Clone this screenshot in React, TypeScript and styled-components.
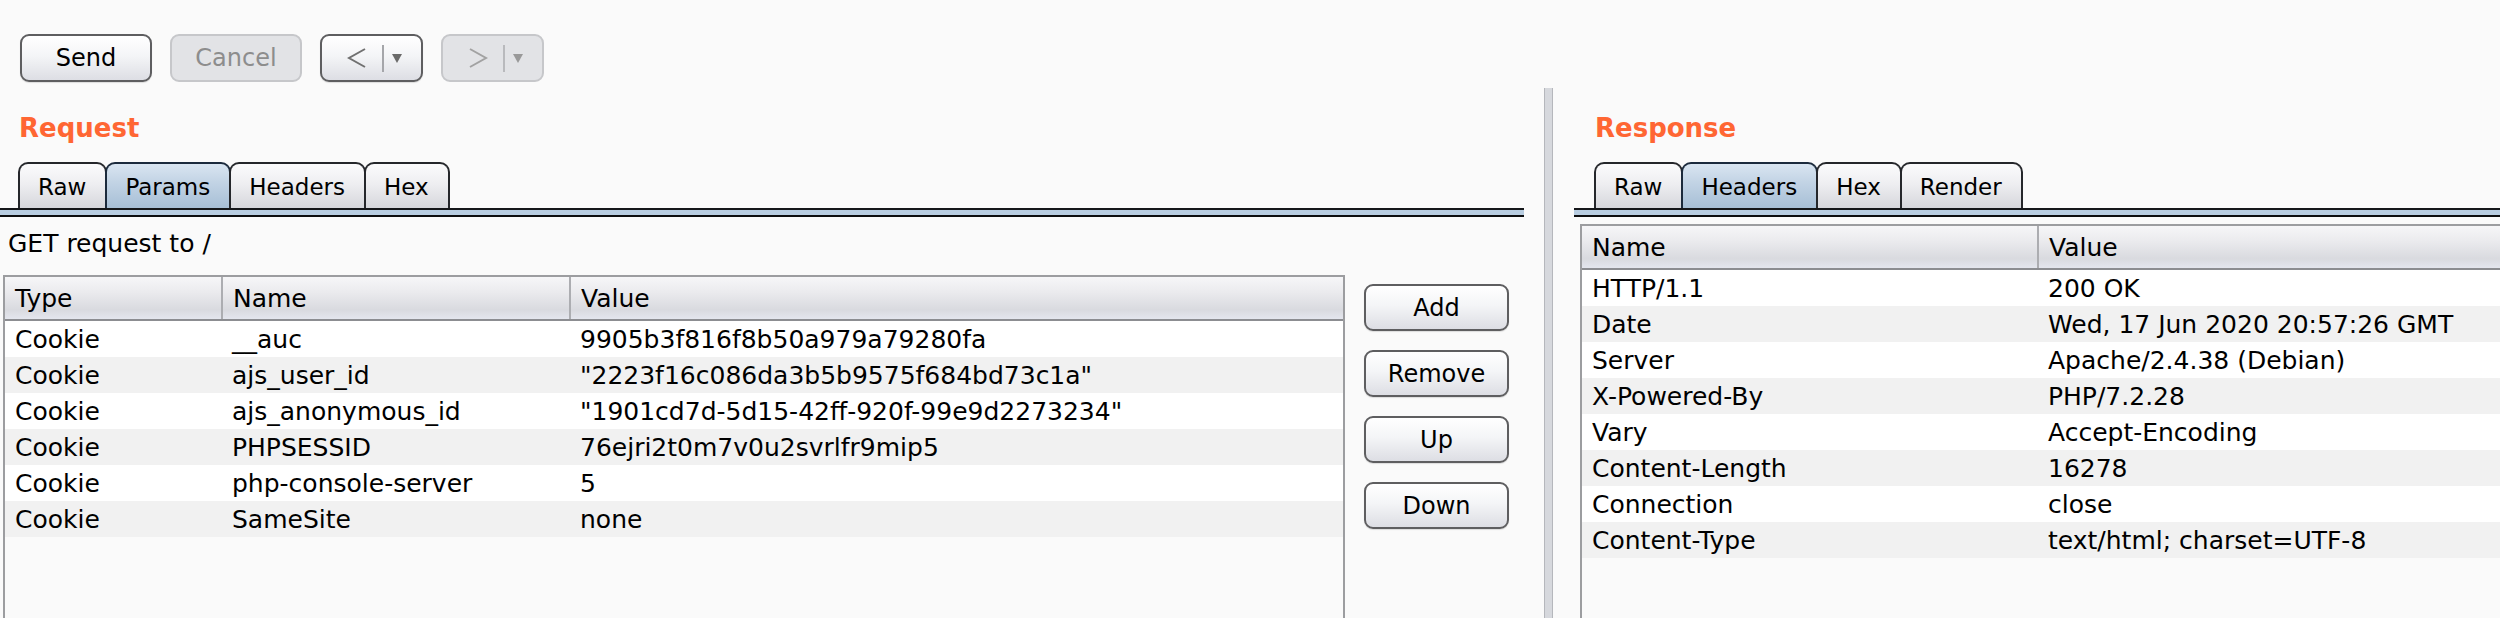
import React from "react";
import styled, { createGlobalStyle, css } from "styled-components";

const GlobalStyle = createGlobalStyle`
  html, body { margin: 0; padding: 0; background: #fafafa; }
  body {
    font-family: "DejaVu Sans", "Liberation Sans", sans-serif;
    color: #000;
    overflow: hidden;
  }
  * { box-sizing: border-box; }
`;

const Page = styled.div`
  height: 618px;
  display: flex;
  flex-direction: column;
  overflow: hidden;
  background: #fafafa;
`;

const Toolbar = styled.div`
  display: flex;
  gap: 18px;
  height: 88px;
  padding: 34px 0 0 20px;
  flex-shrink: 0;
`;

const ToolButton = styled.div<{ $w: number; $off?: boolean }>`
  width: ${(p) => p.$w}px;
  height: 48px;
  border-radius: 9px;
  display: flex;
  align-items: center;
  justify-content: center;
  font-size: 24px;
  ${(p) =>
    p.$off
      ? css`
          border: 2px solid #c6c7ca;
          background: #e2e3e6;
          color: #8d8d8d;
        `
      : css`
          border: 2px solid #5e5e60;
          background: linear-gradient(#ffffff 0%, #f4f5f7 45%, #dddee4 100%);
          color: #000;
          box-shadow: 0 1px 1px rgba(0, 0, 0, 0.12);
        `}
`;

const NavButton = styled(ToolButton)`
  justify-content: flex-start;
  padding-left: 25px;
`;

const NavSep = styled.span<{ $off?: boolean }>`
  width: 2px;
  height: 27px;
  margin: 0 8px 0 15px;
  background: ${(p) => (p.$off ? "#b9babd" : "#a5a6aa")};
`;

const Split = styled.div`
  display: flex;
  flex: 1;
  min-height: 0;
`;

const Pane = styled.div<{ $left?: boolean }>`
  display: flex;
  flex-direction: column;
  min-height: 0;
  ${(p) =>
    p.$left
      ? css`
          width: 1544px;
          flex-shrink: 0;
          padding-right: 20px;
        `
      : css`
          flex: 1;
          padding-left: 21px;
        `}
`;

const Divider = styled.div`
  width: 9px;
  flex-shrink: 0;
  background: #d6d8dd;
  border-left: 1px solid #b5b7bc;
  border-right: 1px solid #b5b7bc;
`;

const Title = styled.div<{ $indent: number }>`
  height: 74px;
  padding: 24px 0 0 ${(p) => p.$indent}px;
  font-size: 26px;
  line-height: 32px;
  font-weight: bold;
  color: #ff6633;
`;

const TabRow = styled.div<{ $indent: number }>`
  display: flex;
  height: 46px;
  padding-left: ${(p) => p.$indent}px;
`;

const Tab = styled.div<{ $active?: boolean }>`
  height: 46px;
  padding: 2px 19px 0 18px;
  margin-left: -2px;
  display: flex;
  align-items: center;
  font-size: 23px;
  border: 2px solid #1f2226;
  border-bottom: none;
  border-radius: 10px 10px 0 0;
  background: ${(p) =>
    p.$active
      ? "linear-gradient(#d9e5f1 0%, #c3d4e5 40%, #a7bfd6 100%)"
      : "linear-gradient(#fbfbfc 0%, #eeeef1 45%, #d6d7dc 100%)"};
  border-color: ${(p) => (p.$active ? "#1b2a3c" : "#25272b")};
  &:first-child { margin-left: 0; }
`;

const Strip = styled.div`
  height: 9px;
  border-top: 2px solid #15171a;
  border-bottom: 2px solid #0c0d0f;
  background: #b8cde1;
  flex-shrink: 0;
`;

const GetLabel = styled.div`
  margin: 13px 0 0 8px;
  font-size: 25px;
  line-height: 28px;
`;

const ContentRow = styled.div`
  display: flex;
  gap: 19px;
  flex: 1;
  min-height: 0;
  margin-top: 17px;
  padding-left: 3px;
`;

const TableBox = styled.div<{ $w?: number; $top?: number }>`
  ${(p) => (p.$w ? `width: ${p.$w}px; flex-shrink: 0;` : "flex: 1;")}
  margin-top: ${(p) => p.$top ?? 0}px;
  border: 2px solid #9c9da0;
  border-bottom: none;
  border-right-width: ${(p) => (p.$w ? 2 : 0)}px;
  background: #fafafa;
  display: flex;
  flex-direction: column;
  min-height: 0;
`;

const RightBody = styled.div`
  display: flex;
  flex: 1;
  min-height: 0;
  padding-left: 6px;
`;

const Grid = styled.div<{ $cols: string }>`
  display: grid;
  grid-template-columns: ${(p) => p.$cols};
`;

const HeadRow = styled(Grid)`
  height: 44px;
  border-bottom: 2px solid #8c8d91;
  background: linear-gradient(#f6f6f8 0%, #ebebee 35%, #d9dadf 78%, #e4e6ee 100%);
`;

const HeadCell = styled.div`
  display: flex;
  align-items: center;
  padding: 1px 0 0 10px;
  font-size: 25px;
  border-left: 2px solid #acadb1;
  &:first-child { border-left: none; }
`;

const Row = styled(Grid)`
  height: 36px;
  background: #ffffff;
  &:nth-child(even) { background: #f1f1f1; }
`;

const Cell = styled.div`
  display: flex;
  align-items: center;
  padding: 1px 0 0 11px;
  font-size: 25px;
  white-space: nowrap;
  &:first-child { padding-left: 10px; }
`;

const SideButtons = styled.div`
  display: flex;
  flex-direction: column;
  gap: 19px;
  padding-top: 9px;
  width: 145px;
`;

const SideButton = styled.div`
  height: 47px;
  border-radius: 9px;
  border: 2px solid #5e5e60;
  background: linear-gradient(#ffffff 0%, #f4f5f7 45%, #dddee4 100%);
  box-shadow: 0 1px 1px rgba(0, 0, 0, 0.12);
  display: flex;
  align-items: center;
  justify-content: center;
  font-size: 24px;
`;

const Chevron = ({ dir, color }: { dir: "left" | "right"; color: string }) => (
  <svg width="20" height="24" viewBox="0 0 20 24">
    <polyline
      points={dir === "left" ? "18,3 2,12 18,21" : "2,3 18,12 2,21"}
      fill="none"
      stroke={color}
      strokeWidth="2"
    />
  </svg>
);

const Caret = ({ color }: { color: string }) => (
  <svg width="10" height="9" viewBox="0 0 10 9">
    <polygon points="0,0 10,0 5,9" fill={color} />
  </svg>
);

const params = [
  ["Cookie", "__auc", "9905b3f816f8b50a979a79280fa"],
  ["Cookie", "ajs_user_id", "\"2223f16c086da3b5b9575f684bd73c1a\""],
  ["Cookie", "ajs_anonymous_id", "\"1901cd7d-5d15-42ff-920f-99e9d2273234\""],
  ["Cookie", "PHPSESSID", "76ejri2t0m7v0u2svrlfr9mip5"],
  ["Cookie", "php-console-server", "5"],
  ["Cookie", "SameSite", "none"],
];

const headers = [
  ["HTTP/1.1", "200 OK"],
  ["Date", "Wed, 17 Jun 2020 20:57:26 GMT"],
  ["Server", "Apache/2.4.38 (Debian)"],
  ["X-Powered-By", "PHP/7.2.28"],
  ["Vary", "Accept-Encoding"],
  ["Content-Length", "16278"],
  ["Connection", "close"],
  ["Content-Type", "text/html; charset=UTF-8"],
];

const leftCols = "216px 348px 1fr";
const rightCols = "455px 1fr";

export default function App() {
  return (
    <Page>
      <GlobalStyle />
      <Toolbar>
        <ToolButton $w={132}>Send</ToolButton>
        <ToolButton $w={132} $off>
          Cancel
        </ToolButton>
        <NavButton $w={103}>
          <Chevron dir="left" color="#707070" />
          <NavSep />
          <Caret color="#6a6a6a" />
        </NavButton>
        <NavButton $w={103} $off>
          <Chevron dir="right" color="#a2a2a2" />
          <NavSep $off />
          <Caret color="#999999" />
        </NavButton>
      </Toolbar>
      <Split>
        <Pane $left>
          <Title $indent={19}>Request</Title>
          <TabRow $indent={18}>
            <Tab>Raw</Tab>
            <Tab $active>Params</Tab>
            <Tab>Headers</Tab>
            <Tab>Hex</Tab>
          </TabRow>
          <Strip />
          <GetLabel>GET request to /</GetLabel>
          <ContentRow>
            <TableBox $w={1342}>
              <HeadRow $cols={leftCols}>
                <HeadCell>Type</HeadCell>
                <HeadCell>Name</HeadCell>
                <HeadCell>Value</HeadCell>
              </HeadRow>
              <div>
                {params.map((r, i) => (
                  <Row key={i} $cols={leftCols}>
                    {r.map((c, j) => (
                      <Cell key={j}>{c}</Cell>
                    ))}
                  </Row>
                ))}
              </div>
            </TableBox>
            <SideButtons>
              <SideButton>Add</SideButton>
              <SideButton>Remove</SideButton>
              <SideButton>Up</SideButton>
              <SideButton>Down</SideButton>
            </SideButtons>
          </ContentRow>
        </Pane>
        <Divider />
        <Pane>
          <Title $indent={21}>Response</Title>
          <TabRow $indent={20}>
            <Tab>Raw</Tab>
            <Tab $active>Headers</Tab>
            <Tab>Hex</Tab>
            <Tab>Render</Tab>
          </TabRow>
          <Strip />
          <RightBody>
            <TableBox $top={7}>
              <HeadRow $cols={rightCols}>
                <HeadCell>Name</HeadCell>
                <HeadCell>Value</HeadCell>
              </HeadRow>
              <div>
                {headers.map((r, i) => (
                  <Row key={i} $cols={rightCols}>
                    {r.map((c, j) => (
                      <Cell key={j}>{c}</Cell>
                    ))}
                  </Row>
                ))}
              </div>
            </TableBox>
          </RightBody>
        </Pane>
      </Split>
    </Page>
  );
}
